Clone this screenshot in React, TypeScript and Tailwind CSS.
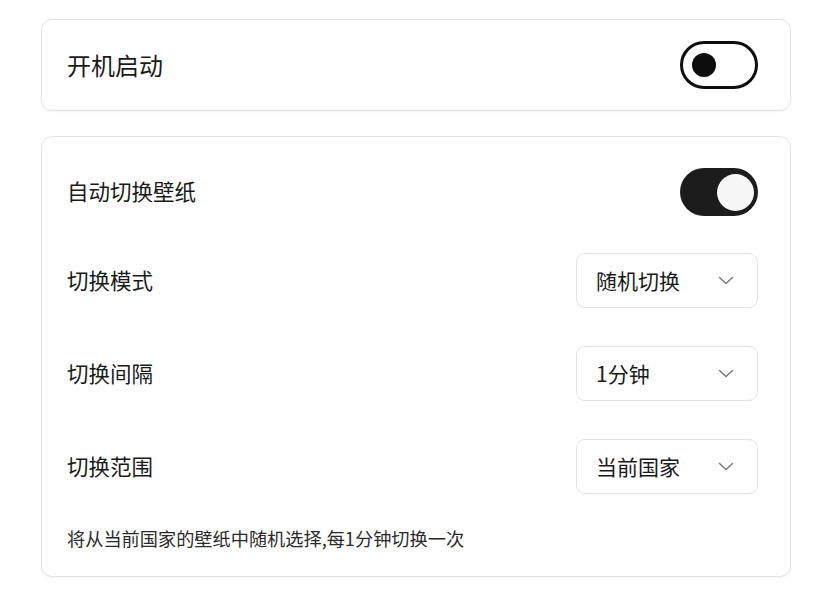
import React from "react";

const font = { fontFamily: '"Noto Sans CJK SC", "Noto Sans", sans-serif' };

function Chevron() {
  return (
    <svg width="16" height="9" viewBox="0 0 16 9" fill="none" className="shrink-0">
      <polyline points="1.5,1.5 8,7.5 14.5,1.5" stroke="#7a7a7a" strokeWidth="1.5" strokeLinecap="round" strokeLinejoin="round" />
    </svg>
  );
}

function Select({ value }: { value: string }) {
  return (
    <div className="w-[182px] h-[55px] box-border border border-[#e2e2e2] rounded-[9px] bg-white flex items-center justify-between pl-[19px] pr-[23px]">
      <span className="text-[21px] text-[#1a1a1a] leading-none">{value}</span>
      <Chevron />
    </div>
  );
}

export default function App() {
  return (
    <div className="w-[840px] h-[598px] bg-white" style={font}>
      <div className="pt-[19px] pl-[41px]">
        <div className="w-[750px] h-[92px] box-border border border-[#e3e3e3] rounded-[11px] shadow-[0_1px_2px_rgba(0,0,0,0.05)] flex items-center justify-between pl-[25px] pr-[32px]">
          <span className="text-[24px] text-[#1a1a1a] leading-none">开机启动</span>
          <div className="w-[78px] h-[48px] box-border border-[3px] border-[#0d0d0d] rounded-full flex items-center pl-[9px]">
            <div className="w-[24px] h-[24px] rounded-full bg-[#0d0d0d]" />
          </div>
        </div>

        <div className="mt-[25px] w-[750px] h-[441px] box-border border border-[#e3e3e3] rounded-[11px] shadow-[0_1px_2px_rgba(0,0,0,0.05)] pl-[25px] pr-[32px] pt-[31px]">
          <div className="flex items-center justify-between h-[48px]">
            <span className="text-[21.5px] text-[#1a1a1a] leading-none -mt-[3px]">自动切换壁纸</span>
            <div className="w-[78px] h-[48px] rounded-full bg-[#1c1c1c] flex items-center justify-end pr-[4px]">
              <div className="w-[37px] h-[37px] rounded-full bg-[#f7f7f7]" />
            </div>
          </div>
          <div className="mt-[37px] flex items-center justify-between">
            <span className="text-[21.5px] text-[#1a1a1a] leading-none -mt-[2px]">切换模式</span>
            <Select value="随机切换" />
          </div>
          <div className="mt-[38px] flex items-center justify-between">
            <span className="text-[21.5px] text-[#1a1a1a] leading-none -mt-[2px]">切换间隔</span>
            <Select value="1分钟" />
          </div>
          <div className="mt-[38px] flex items-center justify-between">
            <span className="text-[21.5px] text-[#1a1a1a] leading-none -mt-[2px]">切换范围</span>
            <Select value="当前国家" />
          </div>
          <div className="mt-[31px] h-[26px] flex items-center text-[18.2px] text-[#2a2a2a] leading-none">
            将从当前国家的壁纸中随机选择,每1分钟切换一次
          </div>
        </div>
      </div>
    </div>
  );
}
